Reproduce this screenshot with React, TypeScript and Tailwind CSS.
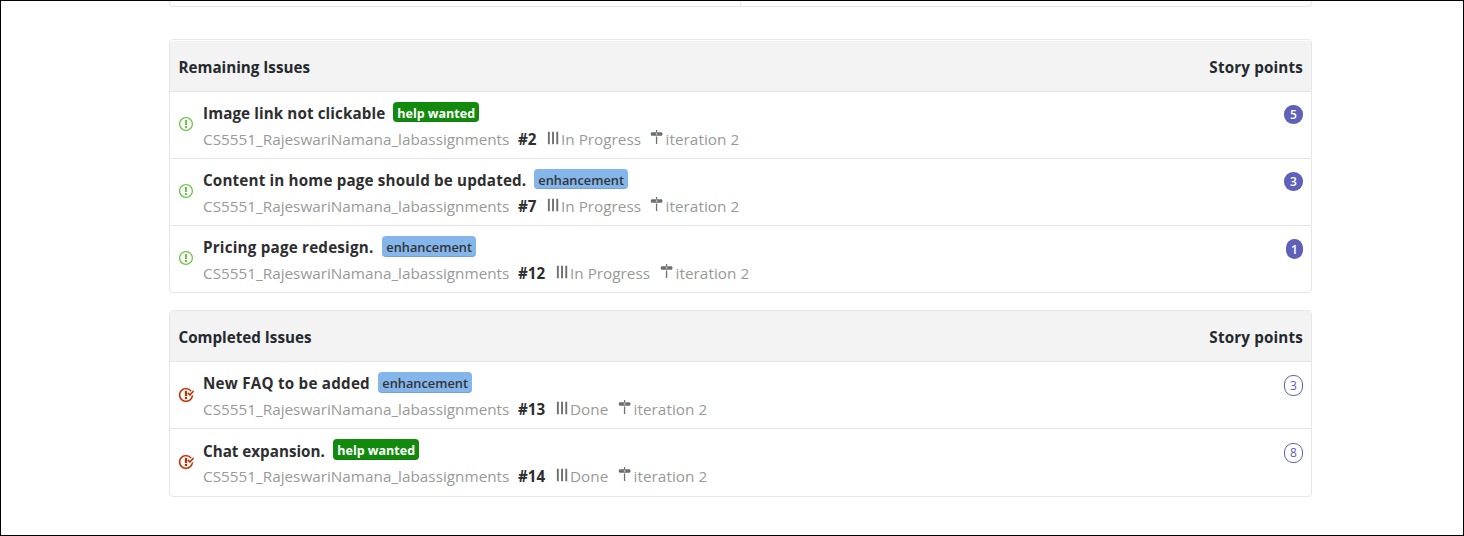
type Label = "help wanted" | "enhancement";

interface Issue {
  title: string;
  titleClass: string;
  label: Label;
  labelClass: string;
  number: number;
  numberClass: string;
  pipeline: string;
  pipelineClass: string;
  points: number;
  pointsClass: string;
  rowClass: string;
}

const remaining: Issue[] = [
  { title: "Image link not clickable", titleClass: "w-[190px] tracking-[0.1px]", label: "help wanted", labelClass: "h-[20px]", number: 2, numberClass: "w-[29px]", pipeline: "In Progress", pipelineClass: "w-[90px]", points: 5, pointsClass: "mt-[13px] h-[19px] w-[19px]", rowClass: "h-[66px]" },
  { title: "Content in home page should be updated.", titleClass: "w-[331px] tracking-[0.17px]", label: "enhancement", labelClass: "h-[20px]", number: 7, numberClass: "w-[29px]", pipeline: "In Progress", pipelineClass: "w-[90px]", points: 3, pointsClass: "mt-[13px] h-[19px] w-[19px]", rowClass: "h-[67px] border-t" },
  { title: "Pricing page redesign.", titleClass: "w-[179px] tracking-[0.21px]", label: "enhancement", labelClass: "h-[21px]", number: 12, numberClass: "w-[38px]", pipeline: "In Progress", pipelineClass: "w-[91px]", points: 1, pointsClass: "mt-[13px] h-[20px] w-[17px]", rowClass: "h-[67px] border-t" },
];

const completed: Issue[] = [
  { title: "New FAQ to be added", titleClass: "w-[175px] tracking-[0.23px]", label: "enhancement", labelClass: "h-[21px]", number: 13, numberClass: "w-[38px]", pipeline: "Done", pipelineClass: "w-[49px]", points: 3, pointsClass: "mt-[13px] h-[21px] w-[19px]", rowClass: "h-[66px]" },
  { title: "Chat expansion.", titleClass: "w-[130px] pt-px", label: "help wanted", labelClass: "h-[21px]", number: 14, numberClass: "w-[38px]", pipeline: "Done", pipelineClass: "w-[49px]", points: 8, pointsClass: "mt-[14px] h-[20px] w-[19px]", rowClass: "h-[68px] border-t" },
];

const labelColors: Record<Label, string> = {
  "help wanted": "bg-[#128a0c] text-white font-bold text-[12.5px] leading-[23px]",
  enhancement: "bg-[#84b6eb] text-[#333333] font-semibold text-[12.8px] leading-[22px]",
};

function OpenIcon() {
  return (
    <svg width="16" height="16" viewBox="0 0 14 16" className="block" fill="#6cc644">
      <path fillRule="evenodd" d="M7 2.3c3.14 0 5.7 2.56 5.7 5.7s-2.56 5.7-5.7 5.7A5.71 5.71 0 0 1 1.3 8c0-3.14 2.56-5.7 5.7-5.7zM7 1C3.14 1 0 4.14 0 8s3.14 7 7 7 7-3.14 7-7-3.14-7-7-7zm1 3H6v5h2V4zm0 6H6v2h2v-2z" />
    </svg>
  );
}

function ClosedIcon() {
  return (
    <svg width="16" height="16" viewBox="0 0 16 16" className="block" fill="#bd2c00" stroke="#bd2c00" strokeWidth="0.25">
      <path fillRule="evenodd" d="M7 10h2v2H7v-2zm2-6H7v5h2V4zm1.5 1.5l-1 1L12 9l4-4.5-1-1L12 7l-1.5-1.5zM8 13.7A5.71 5.71 0 0 1 2.3 8c0-3.14 2.56-5.7 5.7-5.7 1.83 0 3.45.88 4.5 2.2l.92-.92A6.947 6.947 0 0 0 8 1C4.14 1 1 4.14 1 8s3.14 7 7 7 7-3.14 7-7l-1.52 1.52c-.66 2.41-2.86 4.19-5.48 4.19v-.01z" />
    </svg>
  );
}

function PipelineIcon() {
  return (
    <svg width="14" height="16" viewBox="0 0 14 16" className="block shrink-0" fill="#6e6e6e">
      <path d="M.9 1.8h1.9v12.4H.9zM5.1 1.8H7v12.4H5.1zM9.3 1.8h1.9v12.4H9.3z" />
    </svg>
  );
}

function MilestoneIcon() {
  return (
    <svg width="14" height="16" viewBox="0 0 14 16" className="block shrink-0" fill="#6e6e6e">
      <path fillRule="evenodd" d="M6 0h1.2v2H6zM1.6 2.2h10.2L12.7 4l-.9 1.7H1.6L.8 5V3zM5.9 3.4v1h1.5v-1zM5.9 6.4h1.3V14H5.9z" />
    </svg>
  );
}

function Row({ issue, done }: { issue: Issue; done: boolean }) {
  return (
    <div className={`flex border-[#e6e6e6] pr-[8px] ${issue.rowClass}`}>
      <div className={done ? "w-[33px] pl-[8px] pt-[24.5px]" : "w-[33px] pl-[8px] pt-[24px]"}>{done ? <ClosedIcon /> : <OpenIcon />}</div>
      <div className="flex-1 whitespace-nowrap pt-[10px]">
        <div className="flex h-[22px]">
          <span className={`text-[15.2px] font-bold leading-[22px] text-[#2e2e30] ${issue.titleClass}`}>{issue.title}</span>
          <span className={`rounded-[4px] px-[4.3px] shadow-[inset_0_-1px_0_rgba(27,31,35,0.12)] ${issue.labelClass} ${labelColors[issue.label]}`}>{issue.label}</span>
        </div>
        <div className="mt-[4px] flex h-[22px] text-[15.3px] leading-[22px] text-[#999999]">
          <span className="w-[315px]">CS5551_RajeswariNamana_labassignments</span>
          <span className={`text-[15.2px] font-bold text-[#2e2e30] ${issue.numberClass}`}>#{issue.number}</span>
          <span className={`flex ${issue.pipelineClass}`}>
            <span className="pt-[2px]"><PipelineIcon /></span>
            {issue.pipeline}
          </span>
          <span className="ml-[12.5px] flex tracking-[0.05px]">
            <span className="pt-[2px]"><MilestoneIcon /></span>
            <span className="pl-[2px]">iteration 2</span>
          </span>
        </div>
      </div>
      <span
        className={`flex items-center justify-center rounded-[9px] text-[12px] leading-none ${issue.pointsClass} ${done ? "border border-[#5e60ba] text-[#5e60ba]" : "bg-[#5e60ba] pt-px font-semibold text-white"}`}
      >
        {issue.points}
      </span>
    </div>
  );
}

function Panel({ heading, issues, done }: { heading: string; issues: Issue[]; done: boolean }) {
  return (
    <section className="overflow-hidden rounded-[4px] border border-[#e6e6e6] bg-white">
      <div className={`flex justify-between border-b border-[#e6e6e6] bg-[#f3f3f3] pl-[8.5px] pr-[8px] pt-[15px] text-[15.2px] font-bold leading-[22px] text-[#24292e] ${done ? "h-[51px]" : "h-[52px] border-t border-t-white"}`}>
        <h2>{heading}</h2>
        <span className="tracking-[0.17px]">Story points</span>
      </div>
      {issues.map((issue) => (
        <Row key={issue.number} issue={issue} done={done} />
      ))}
    </section>
  );
}

export default function App() {
  return (
    <main className="h-[536px] w-[1464px] overflow-hidden border border-black bg-white pl-[168px] font-['Open_Sans','Noto_Sans',sans-serif]">
      <div className="w-[1143px]">
        <div className="flex h-[6px] rounded-b-[4px] border border-t-0 border-[#e6e6e6]">
          <div className="w-[571px] border-r border-[#e6e6e6]" />
        </div>
        <div className="mt-[32px] flex flex-col gap-[17px]">
          <Panel heading="Remaining Issues" issues={remaining} done={false} />
          <Panel heading="Completed Issues" issues={completed} done />
        </div>
      </div>
    </main>
  );
}
